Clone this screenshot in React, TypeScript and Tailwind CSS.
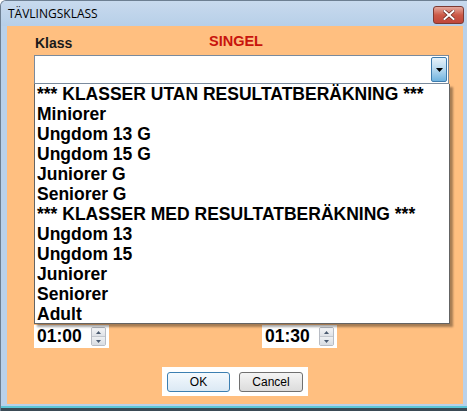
import React from 'react';

const sans = { fontFamily: '"Liberation Sans", Arial, sans-serif' };

const items = [
  '*** KLASSER UTAN RESULTATBERÄKNING ***',
  'Miniorer',
  'Ungdom 13 G',
  'Ungdom 15 G',
  'Juniorer G',
  'Seniorer G',
  '*** KLASSER MED RESULTATBERÄKNING ***',
  'Ungdom 13',
  'Ungdom 15',
  'Juniorer',
  'Seniorer',
  'Adult',
];

const Spinner = () => (
  <div className="flex flex-col w-[15px] h-[19px] border border-[#b8bcc4] rounded-[2px] overflow-hidden">
    <div className="flex-1 flex items-center justify-center bg-gradient-to-b from-[#f4f5f7] to-[#dfe2e7] border-b border-[#c4c8ce]">
      <svg width="5" height="3" viewBox="0 0 5 3"><path d="M0 3 L2.5 0 L5 3 Z" fill="#4a5a70" /></svg>
    </div>
    <div className="flex-1 flex items-center justify-center bg-gradient-to-b from-[#eef0f3] to-[#d8dce2]">
      <svg width="5" height="3" viewBox="0 0 5 3"><path d="M0 0 L2.5 3 L5 0 Z" fill="#4a5a70" /></svg>
    </div>
  </div>
);

const TimeBox = ({ value }: { value: string }) => (
  <div className="flex items-center w-[75px] h-[23px] bg-white pl-[3px] gap-[9px]">
    <span className="text-[17.5px] font-bold leading-none text-black" style={sans}>{value}</span>
    <Spinner />
  </div>
);

export default function App() {
  return (
    <div className="w-[467px] h-[411px] bg-[#b9d1ea] border-l border-t border-[#6d7f92] rounded-tl-[6px] flex flex-col overflow-hidden">
      {/* title bar */}
      <div className="h-[25px] flex items-center justify-between bg-gradient-to-b from-[#c8daee] to-[#b7cfe8]">
        <span className="pl-[7px] text-[12px] text-black" style={{ fontFamily: '"Open Sans", "Noto Sans", sans-serif' }}>
          TÄVLINGSKLASS
        </span>
        <div className="mr-[3px] mt-[2px] w-[31px] h-[18px] rounded-[3px] border border-[#7d3a32] bg-gradient-to-b from-[#e3a99e] via-[#cc5a48] to-[#c0463a] flex items-center justify-center">
          <svg width="12" height="10" viewBox="0 0 12 10">
            <path d="M1.5 1 L10.5 9 M10.5 1 L1.5 9" stroke="#6b2a22" strokeWidth="3.4" strokeLinecap="square" />
            <path d="M1.5 1 L10.5 9 M10.5 1 L1.5 9" stroke="#ffffff" strokeWidth="2" strokeLinecap="square" />
          </svg>
        </div>
      </div>

      {/* client area */}
      <div className="flex flex-1">
        <div className="w-[6px]" />
        <div className="relative w-[456px] h-[378px] bg-[#ffbf80] pt-[8px]">
          <div className="flex h-[21px] pl-[28px]" style={sans}>
            <span className="w-[174px] mt-[2px] text-[14px] leading-none font-bold text-[#1a1a1a]">Klass</span>
            <span className="text-[14.5px] leading-none font-bold text-[#c8140c]">SINGEL</span>
          </div>

          {/* combo */}
          <div className="relative ml-[27px] w-[415px]">
            <div className="h-[29px] flex justify-end bg-white border border-[#7a8a9c] p-[1px]">
              <div className="w-[16px] h-full rounded-[2px] border border-[#3d7bad] bg-gradient-to-b from-[#e6f2fa] via-[#b5d8ef] to-[#6fb3df] flex items-center justify-center">
                <svg width="7" height="4" viewBox="0 0 7 4"><path d="M0 0 L7 0 L3.5 4 Z" fill="#000" /></svg>
              </div>
            </div>
            {/* dropdown list */}
            <div className="absolute left-0 top-[29px] w-[416px] h-[240px] bg-white border border-[#646464] border-t-0 shadow-[3px_3px_2px_rgba(0,0,0,0.35)] z-10 flex flex-col pl-[2px]" style={sans}>
              {items.map((t) => (
                <div key={t} className="h-[20px] leading-[20px] text-[17.5px] font-bold text-black whitespace-nowrap">
                  {t}
                </div>
              ))}
            </div>
          </div>

          {/* time row */}
          <div className="flex mt-[241px] pl-[27px] gap-[153px]">
            <TimeBox value="01:00" />
            <TimeBox value="01:30" />
          </div>

          {/* buttons */}
          <div className="ml-[155px] mt-[19px] w-[146px] h-[29px] bg-white flex items-center justify-center gap-[9px]" style={sans}>
            <button className="w-[63px] h-[20px] rounded-[3px] border border-[#3c7fb1] bg-gradient-to-b from-[#f4f9fd] to-[#dbe9f4] text-[12px] text-black leading-none">
              OK
            </button>
            <button className="w-[64px] h-[20px] rounded-[3px] border border-[#707070] bg-gradient-to-b from-[#f4f4f4] to-[#dcdcdc] text-[12px] text-black leading-none">
              Cancel
            </button>
          </div>
        </div>
        <div className="flex-1" />
      </div>

      {/* bottom frame */}
      <div className="h-[7px] border-b-[3px] border-b-[#3a4a55] flex flex-col justify-end">
        <div className="h-[2px] bg-[#5cc6d6]" />
      </div>
    </div>
  );
}
